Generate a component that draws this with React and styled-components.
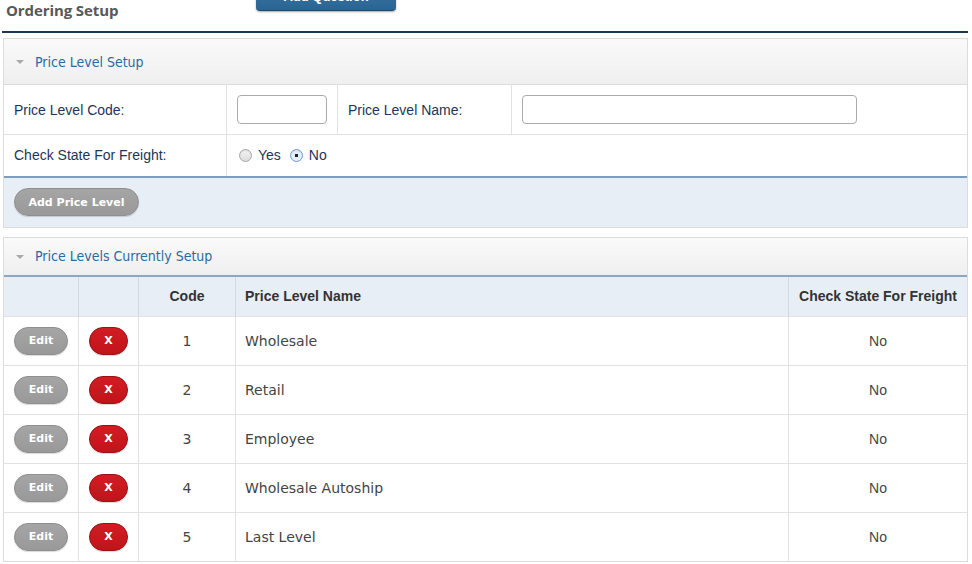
import React from "react";
import styled, { createGlobalStyle } from "styled-components";

const GlobalStyle = createGlobalStyle`
  body {
    margin: 0;
    background: #fff;
    font-family: "Liberation Sans", Arial, sans-serif;
  }
`;

const Page = styled.div`
  padding: 0 4px 0 3px;
  width: 972px;
  box-sizing: border-box;
  overflow: hidden;
`;

const TopBar = styled.div`
  display: grid;
  grid-template-columns: 254px 140px;
  align-items: start;
  height: 31px;
  border-bottom: 2px solid #173754;
  margin-left: -1px;
`;

const PageTitle = styled.div`
  font-family: "Open Sans", sans-serif;
  font-weight: 700;
  font-size: 15px;
  color: #585858;
  padding: 0 0 0 4px;
  line-height: 20px;
  letter-spacing: -0.1px;
`;

const TopButton = styled.div`
  margin-top: -20px;
  height: 30px;
  border-radius: 4px;
  background: linear-gradient(#3d7bab, #2a6493);
  border-bottom: 1px solid #1c4a70;
  box-shadow: 0 1px 2px rgba(0, 0, 0, 0.35);
  color: #fff;
  font-weight: 700;
  font-size: 13px;
  text-align: center;
  line-height: 34px;
  overflow: hidden;
`;

const Panel = styled.div`
  border: 1px solid #dcdcdc;
  margin-top: ${(p) => p.$gap}px;
`;

const PanelHeader = styled.div`
  display: flex;
  align-items: center;
  gap: 11px;
  height: ${(p) => p.$h}px;
  padding-left: 12px;
  background: linear-gradient(#fafafa, #efefef);
  font-family: "DejaVu Sans Condensed", "Liberation Sans Narrow", sans-serif;
  font-size: 14px;
  color: #2b6aa0;
`;

const Caret = styled.span`
  width: 0;
  height: 0;
  border-left: 4px solid transparent;
  border-right: 4px solid transparent;
  border-top: 4px solid #a9a9a9;
  margin-top: 1px;
`;

const FormTable = styled.table`
  width: 100%;
  border-collapse: collapse;
  border-top: 1px solid #dcdcdc;
  td {
    font-size: 14px;
    color: #1c3658;
    padding: 0 10px;
  }
`;

const FormRow = styled.tr`
  height: ${(p) => p.$h}px;
  td {
    border-bottom: ${(p) => (p.$line ? "1px solid #e2e2e2" : "none")};
  }
`;

const LabelCell = styled.td`
  width: 202px;
  border-right: ${(p) => (p.$sep ? "1px solid #e2e2e2" : "none")};
`;

const InputCell = styled.td`
  width: ${(p) => p.$w}px;
  border-right: ${(p) => (p.$sep ? "1px solid #e2e2e2" : "none")};
`;

const TextInput = styled.input`
  box-sizing: border-box;
  width: ${(p) => p.$w}px;
  height: 29px;
  border: 1px solid #ababab;
  border-radius: 4px;
  background: #fff;
  display: block;
`;

const RadioGroup = styled.div`
  display: flex;
  align-items: center;
  gap: 6px;
  padding-left: 2px;
`;

const Radio = styled.span`
  width: 13px;
  height: 13px;
  border-radius: 50%;
  box-sizing: border-box;
  border: 1px solid ${(p) => (p.$on ? "#6f9ed3" : "#a8a8a8")};
  background: ${(p) =>
    p.$on
      ? "radial-gradient(circle, #222 0 1.5px, #e3eefb 2px)"
      : "linear-gradient(#f4f4f4, #dcdcdc)"};
  box-shadow: inset 0 1px 1px rgba(0, 0, 0, 0.1);
`;

const RadioLabel = styled.span`
  margin-right: 3px;
`;

const Footer = styled.div`
  border-top: 2px solid #7e9dbc;
  background: #e7eef6;
  height: 49px;
  display: flex;
  align-items: center;
  padding-left: 10px;
`;

const Pill = styled.button`
  height: 28px;
  border-radius: 14px;
  padding: 0;
  width: ${(p) => p.$w}px;
  border: 1px solid ${(p) => (p.$red ? "#9d1015" : "#8f8f8f")};
  background: ${(p) =>
    p.$red
      ? "linear-gradient(#d11d23, #c0141a)"
      : "linear-gradient(#a5a5a5, #999)"};
  color: #fff;
  font-family: "DejaVu Sans", Verdana, sans-serif;
  font-weight: 700;
  font-size: 11px;
  box-shadow: 0 1px 1px rgba(0, 0, 0, 0.15);
`;

const ListTable = styled.table`
  width: 100%;
  border-collapse: collapse;
  border-top: 2px solid #8ca7c2;
`;

const HeadCell = styled.th`
  background: #e7eef6;
  height: 39px;
  font-size: 14px;
  font-weight: 700;
  color: #333;
  text-align: ${(p) => p.$align || "center"};
  padding: 0 9px;
  width: ${(p) => (p.$w ? `${p.$w}px` : "auto")};
  border-left: 1px solid #d3d9e0;
  &:first-child {
    border-left: none;
  }
`;

const Row = styled.tr`
  height: 49px;
  td {
    border-top: 1px solid #e2e2e2;
    border-left: 1px solid #e2e2e2;
  }
  td:first-child {
    border-left: none;
  }
`;

const Cell = styled.td`
  font-family: ${(p) =>
    p.$plain ? '"Liberation Sans", Arial, sans-serif' : '"DejaVu Sans", Verdana, sans-serif'};
  font-size: 14px;
  color: #444;
  text-align: ${(p) => p.$align || "center"};
  padding: 0 9px;
`;

const levels = [
  { code: 1, name: "Wholesale" },
  { code: 2, name: "Retail" },
  { code: 3, name: "Employee" },
  { code: 4, name: "Wholesale Autoship" },
  { code: 5, name: "Last Level" },
];

export default function App() {
  return (
    <Page>
      <GlobalStyle />
      <TopBar>
        <PageTitle>Ordering Setup</PageTitle>
        <TopButton>Add Question</TopButton>
      </TopBar>

      <Panel $gap={5}>
        <PanelHeader $h={45}>
          <Caret />
          Price Level Setup
        </PanelHeader>
        <FormTable>
          <tbody>
            <FormRow $h={50} $line>
              <LabelCell $sep>Price Level Code:</LabelCell>
              <InputCell $w={90} $sep>
                <TextInput $w={90} />
              </InputCell>
              <InputCell $w={153} $sep>Price Level Name:</InputCell>
              <InputCell>
                <TextInput $w={335} />
              </InputCell>
            </FormRow>
            <FormRow $h={41}>
              <LabelCell $sep>Check State For Freight:</LabelCell>
              <td colSpan={3}>
                <RadioGroup>
                  <Radio />
                  <RadioLabel>Yes</RadioLabel>
                  <Radio $on />
                  <RadioLabel>No</RadioLabel>
                </RadioGroup>
              </td>
            </FormRow>
          </tbody>
        </FormTable>
        <Footer>
          <Pill $w={125}>Add Price Level</Pill>
        </Footer>
      </Panel>

      <Panel $gap={9}>
        <PanelHeader $h={37}>
          <Caret />
          Price Levels Currently Setup
        </PanelHeader>
        <ListTable>
          <thead>
            <tr>
              <HeadCell $w={56} />
              <HeadCell $w={41} />
              <HeadCell $w={78}>Code</HeadCell>
              <HeadCell $align="left">Price Level Name</HeadCell>
              <HeadCell $w={160}>Check State For Freight</HeadCell>
            </tr>
          </thead>
          <tbody>
            {levels.map((l) => (
              <Row key={l.code}>
                <Cell>
                  <Pill $w={54}>Edit</Pill>
                </Cell>
                <Cell>
                  <Pill $w={39} $red>
                    X
                  </Pill>
                </Cell>
                <Cell>{l.code}</Cell>
                <Cell $align="left">{l.name}</Cell>
                <Cell $plain>No</Cell>
              </Row>
            ))}
          </tbody>
        </ListTable>
      </Panel>
    </Page>
  );
}
